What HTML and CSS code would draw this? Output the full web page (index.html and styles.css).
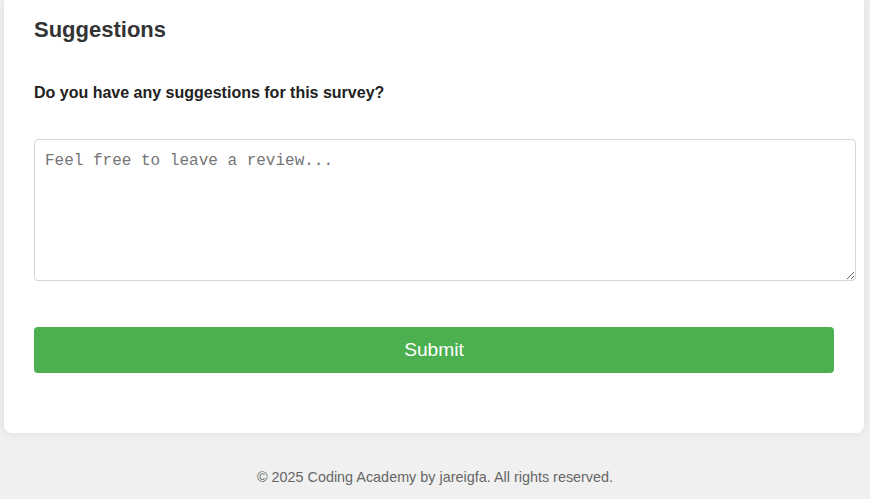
FILE: index.html
```html
<!DOCTYPE html>
<html lang="en">
<head>
<meta charset="utf-8">
<title>Survey</title>
<link rel="stylesheet" href="styles.css">
</head>
<body>
<main class="card">
  <h2 class="section-title">Suggestions</h2>
  <label class="question" for="review">Do you have any suggestions for this survey?</label>
  <textarea id="review" class="review" placeholder="Feel free to leave a review..."></textarea>
  <button class="submit" type="submit">Submit</button>
</main>
<footer class="footer">© 2025 Coding Academy by jareigfa. All rights reserved.</footer>
</body>
</html>
```
FILE: styles.css
```css
html, body {
  margin: 0;
  padding: 0;
}
body {
  background: #f0f0f0;
  font-family: "Liberation Sans", Arial, sans-serif;
  color: #333;
}
.card {
  box-sizing: border-box;
  width: 860px;
  margin-left: 4px;
  padding: 17px 30px 60px;
  background: #fff;
  border-radius: 0 0 8px 8px;
  box-shadow: 0 0 10px rgba(0, 0, 0, 0.08);
  display: flex;
  flex-direction: column;
  align-items: flex-start;
}
.section-title {
  margin: 0 0 41px;
  font-size: 22px;
  font-weight: bold;
  color: #333;
}
.question {
  display: block;
  font-size: 16px;
  font-weight: bold;
  color: #222;
  margin-bottom: 37px;
}
.review {
  display: block;
  width: 800px;
  height: 120px;
  padding: 12px 10px 8px;
  margin: 0 0 46px;
  border: 1px solid #d6d6d6;
  border-radius: 4px;
  font-family: "Liberation Mono", "DejaVu Sans Mono", monospace;
  font-size: 16px;
  color: #333;
  background: #fff;
  resize: vertical;
}
.review::placeholder {
  color: #757575;
}
.submit {
  display: block;
  width: 800px;
  height: 46px;
  padding: 0;
  border: none;
  border-radius: 4px;
  background: #4caf50;
  color: #fff;
  font-family: "Liberation Sans", Arial, sans-serif;
  font-size: 19.2px;
  cursor: pointer;
}
.footer {
  text-align: center;
  font-size: 14.4px;
  color: #666;
  padding: 36px 0 20px;
}
```
